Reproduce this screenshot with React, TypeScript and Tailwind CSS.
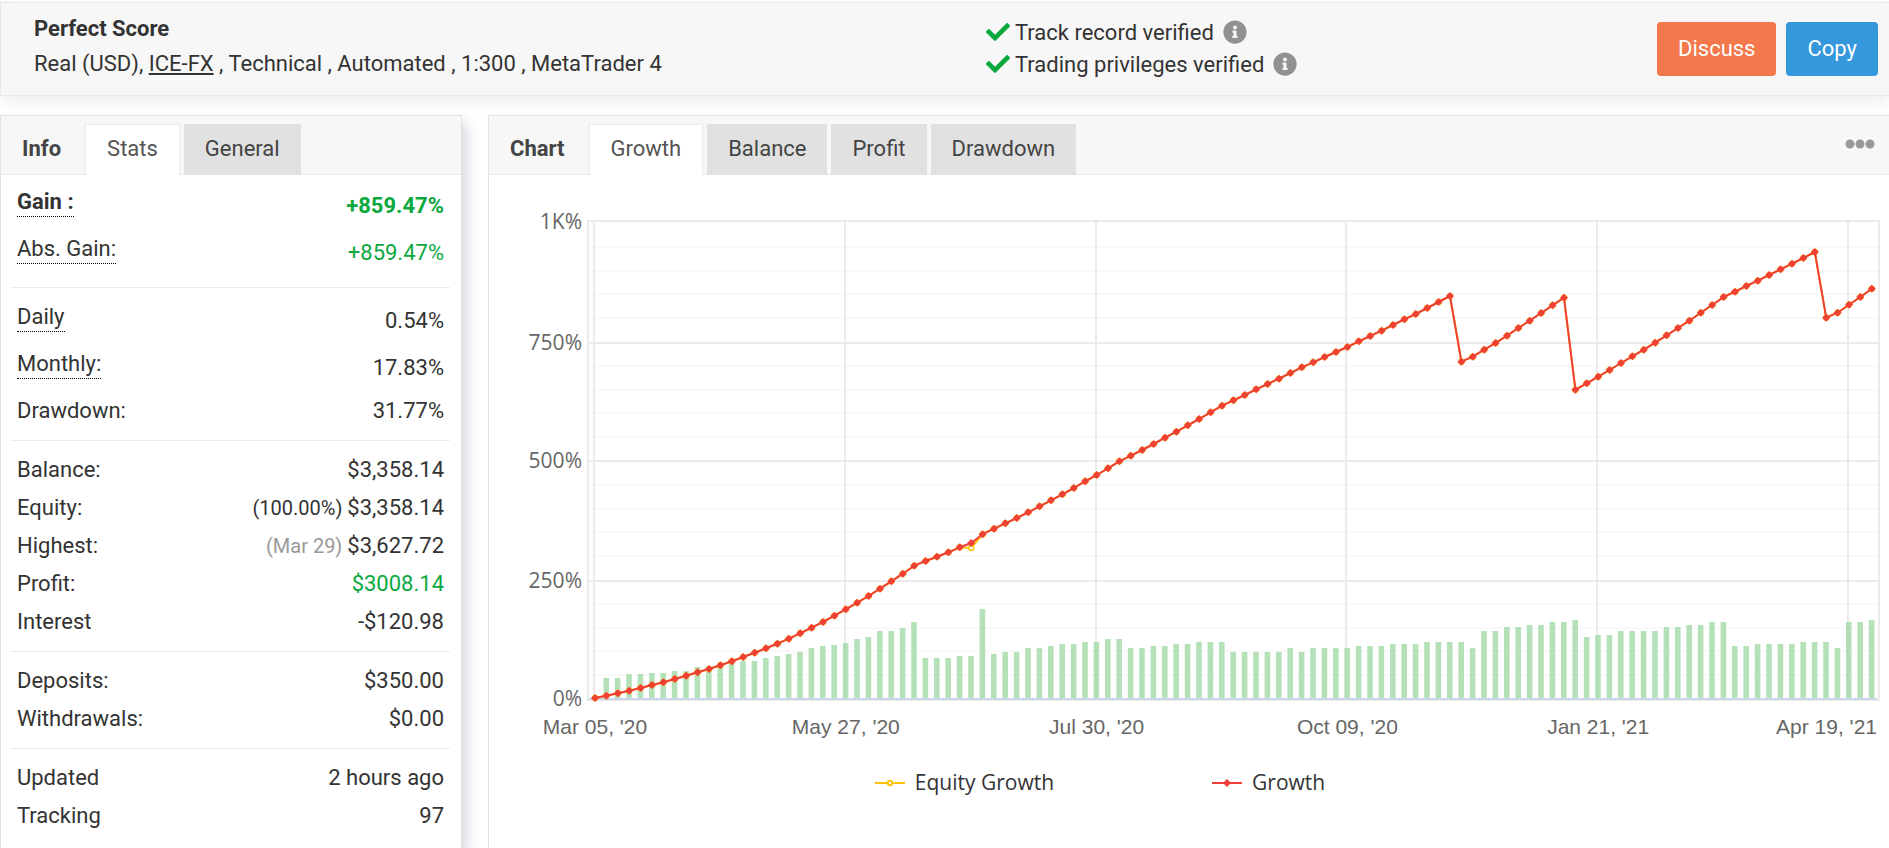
import { useState } from "react";
import { FaCheck, FaInfoCircle } from "react-icons/fa";

type Row = {
  label: string;
  value: string;
  note?: string;
  noteMuted?: boolean;
  hint?: boolean; // dotted underline, taller row
  bold?: boolean;
  green?: boolean;
};

const sections: Row[][] = [
  [
    { label: "Gain :", value: "+859.47%", hint: true, bold: true, green: true },
    { label: "Abs. Gain:", value: "+859.47%", hint: true, green: true },
  ],
  [
    { label: "Daily", value: "0.54%", hint: true },
    { label: "Monthly:", value: "17.83%", hint: true },
    { label: "Drawdown:", value: "31.77%" },
  ],
  [
    { label: "Balance:", value: "$3,358.14" },
    { label: "Equity:", value: "$3,358.14", note: "(100.00%)" },
    { label: "Highest:", value: "$3,627.72", note: "(Mar 29)", noteMuted: true },
    { label: "Profit:", value: "$3008.14", green: true },
    { label: "Interest", value: "-$120.98" },
  ],
  [
    { label: "Deposits:", value: "$350.00" },
    { label: "Withdrawals:", value: "$0.00" },
  ],
  [
    { label: "Updated", value: "2 hours ago" },
    { label: "Tracking", value: "97" },
  ],
];

// heights above the zero line, in plot units (1K% = 476)
const growth = [
  1, 3.3, 5.7, 8.3, 11, 14, 16.7, 20, 23.3, 26.7, 30, 33.7, 37.7, 42, 46.3, 50.7, 55.3, 60.3, 65.7, 71.3,
  77, 83.3, 89.7, 96.3, 103, 110.3, 117.7, 125.3, 133.3, 138, 142.3, 146.7, 151.7, 156, 164.8, 170.3,
  175.7, 181, 186.7, 192.7, 198.7, 204.7, 211, 217.7, 224, 230.7, 237.7, 243.3, 249, 255, 261.3, 267.3,
  273.7, 280, 286.7, 293.3, 298.7, 304, 309.7, 315, 320.3, 326, 331.7, 336.7, 342, 347, 352, 357.7, 363,
  368.3, 374, 379.7, 385, 391, 397, 403, 337.3, 342.3, 349.3, 356, 363.3, 371, 378.3, 386, 393.7, 401.3,
  309.3, 315.7, 322.3, 329, 336, 342.7, 349.3, 356.3, 363.7, 371, 378.3, 386.3, 394, 402, 407.3, 413,
  418.3, 424, 429.7, 435.3, 441, 447, 381.3, 386.3, 394.3, 402, 410.3,
];

const equity = growth.map((v, i) => (i === 33 ? 151 : v));

const bars = [
  0, 21, 21, 25, 25, 26, 26, 28, 28, 32, 32, 34, 36, 38, 38, 41, 43, 45, 47, 51, 53, 54, 56, 60, 62, 68, 68,
  71, 77, 41, 41, 41, 43, 43, 90, 45, 47, 47, 51, 51, 53, 55, 55, 57, 57, 60, 60, 51, 51, 53, 53, 55, 55, 57,
  57, 57, 47, 47, 47, 47, 47, 51, 47, 51, 51, 51, 51, 53, 53, 53, 55, 55, 55, 57, 57, 57, 57, 51, 68, 68, 72,
  72, 74, 74, 77, 77, 79, 62, 64, 64, 68, 68, 68, 68, 72, 72, 74, 74, 77, 77, 53, 53, 55, 55, 55, 55, 57, 57,
  57, 51, 77, 77, 79,
];

const LEFT = 100;
const RIGHT = 1389;
const TOP = 46;
const ZERO = 523;
const STEP = 11.4;

const px = (i: number) => 106 + i * STEP;
const py = (v: number) => ZERO - v;
const line = (data: number[]) =>
  data.map((v, i) => `${i ? "L" : "M"}${px(i).toFixed(1)} ${py(v).toFixed(1)}`).join("");

const yTicks = [
  { label: "1K%", y: 46 },
  { label: "750%", y: 167 },
  { label: "500%", y: 285 },
  { label: "250%", y: 405 },
  { label: "0%", y: 523 },
];

const xTicks = [
  { label: "Mar 05, '20", i: 0 },
  { label: "May 27, '20", i: 22 },
  { label: "Jul 30, '20", i: 44 },
  { label: "Oct 09, '20", i: 66 },
  { label: "Jan 21, '21", i: 88 },
  { label: "Apr 19, '21", i: 110 },
];

function GrowthChart() {
  return (
    <svg viewBox="0 0 1400 570" className="block w-full" role="img" aria-label="Growth chart">
      {Array.from({ length: 20 }, (_, i) => i)
        .filter((i) => i % 5 !== 0)
        .map((i) => (
          <rect key={i} x={LEFT} y={Math.round(ZERO - i * 23.8) - 1} width={RIGHT - LEFT} height="2" fill="#f9f9f9" />
        ))}
      {xTicks.map((t) => (
        <rect key={t.i} x={Math.round(105 + t.i * STEP) - 1} y={TOP} width="2" height={ZERO - TOP} fill="#ebebeb" />
      ))}
      {yTicks.slice(1, 4).map((t) => (
        <rect key={t.label} x={LEFT} y={t.y - 1} width={RIGHT - LEFT} height="2" fill="#ebebeb" />
      ))}
      <rect x={LEFT - 1} y={TOP - 1} width={RIGHT - LEFT + 2} height={ZERO - TOP + 2} fill="none" stroke="#ebebeb" strokeWidth="2" />

      {bars.map((h, i) => (
        <rect key={i} x={px(i) - 3} y={ZERO - h} width="5.6" height={h} fill="#9cd7a1" fillOpacity="0.75" />
      ))}
      <rect x={LEFT} y={ZERO - 1} width={RIGHT - LEFT - 1} height="2" fill="#ccd6eb" />

      <path d={line(equity)} fill="none" stroke="#ffc20e" strokeWidth="2" strokeLinejoin="round" />
      {equity.map((v, i) => (
        <circle key={i} cx={px(i)} cy={py(v)} r="2.5" fill={i === 33 ? "#fff" : "#ffc20e"} stroke="#ffc20e" strokeWidth="1.5" />
      ))}
      <path d={line(growth)} fill="none" stroke="#ee4036" strokeWidth="2" strokeLinejoin="round" />
      {growth.map((v, i) => (
        <path key={i} d={`M${px(i)} ${py(v) - 4}l4 4l-4 4l-4 -4z`} fill="#ee4036" />
      ))}

      {yTicks.map((t) => (
        <text key={t.label} x="93" y={t.y + 7} textAnchor="end" fontSize="21" fill="#666" className="font-['Open_Sans',sans-serif]">
          {t.label}
        </text>
      ))}
      {xTicks.map((t, n) => (
        <text
          key={t.i}
          x={n === xTicks.length - 1 ? 1388 : px(t.i)}
          y="558"
          textAnchor={n === xTicks.length - 1 ? "end" : "middle"}
          fontSize="21"
          fill="#666"
          className="font-['Liberation_Sans',sans-serif]"
        >
          {t.label}
        </text>
      ))}
    </svg>
  );
}

type TabsProps = {
  title: string;
  tabs: string[];
  active: string;
  onPick: (tab: string) => void;
};

function Tabs({ title, tabs, active, onPick }: TabsProps) {
  return (
    <div className="flex h-[51px] items-stretch text-[22px]">
      <h2 className="pr-6 pl-[21px] leading-[49px] font-bold text-[#444]">{title}</h2>
      <div className="flex gap-1" role="tablist">
        {tabs.map((t) => (
          <button
            key={t}
            role="tab"
            aria-selected={t === active}
            onClick={() => onPick(t)}
            className={
              t === active
                ? "border border-b-0 border-[#ebebeb] bg-white px-[21px] pb-[3px] text-[#555]"
                : "bg-[#e1e1e1] px-[21px] pb-0.5 text-[#444]"
            }
          >
            {t}
          </button>
        ))}
      </div>
    </div>
  );
}

function StatRow({ row }: { row: Row }) {
  const weight = row.bold ? "font-bold" : "";
  return (
    <div className={`flex justify-between px-1.5 ${row.hint ? "h-[47px] py-0.5" : "h-[38px]"} ${weight}`}>
      <dt className={row.hint ? "self-start border-b border-dotted border-black pt-1 leading-7" : "self-center"}>
        {row.label}
      </dt>
      <dd className={`self-center ${row.green ? "text-[#0aa83f]" : ""}`}>
        {row.note && (
          <span className={`text-[20px] ${row.noteMuted ? "text-[#999]" : ""}`}>{row.note} </span>
        )}
        {row.value}
      </dd>
    </div>
  );
}

function Verified({ text }: { text: string }) {
  return (
    <li className="flex h-8 items-center gap-[5px]">
      <FaCheck className="size-6 text-[#0aa83f]" />
      {text}
      <FaInfoCircle className="ml-1 size-6 text-[#919191]" />
    </li>
  );
}

export default function App() {
  const [infoTab, setInfoTab] = useState("Stats");
  const [chartTab, setChartTab] = useState("Growth");

  return (
    <div className="flex min-h-screen flex-col overflow-hidden bg-white font-[Roboto,sans-serif] text-[22px] text-[#333]">
      <header className="mt-0.5 flex h-[94px] items-start border border-r-0 border-[#e8e8e8] bg-[#f7f7f7] shadow-[0_4px_16px_rgba(60,60,100,0.1)]">
        <div className="w-[985px] pt-[9px] pl-[33px]">
          <h1 className="leading-[34px] font-bold">Perfect Score</h1>
          <p className="leading-9">
            Real (USD),{" "}
            <a href="#ice-fx" className="underline">
              ICE-FX
            </a>{" "}
            , Technical , Automated , 1:300 , MetaTrader 4
          </p>
        </div>
        <ul className="flex-1 pt-[13px]">
          <Verified text="Track record verified" />
          <Verified text="Trading privileges verified" />
        </ul>
        <div className="flex gap-2.5 pt-[19px] pr-[11px] text-white">
          <button className="h-[54px] rounded-sm bg-[#f3784b] px-[21px] pb-0.5">Discuss</button>
          <button className="h-[54px] rounded-sm bg-[#3598dc] px-[21px] pb-0.5">Copy</button>
        </div>
      </header>

      <main className="mt-[19px] flex flex-1 gap-[26px]">
        <section className="w-[462px] shrink-0 border border-b-0 border-[#e1e1e1] shadow-[5px_8px_12px_rgba(60,60,100,0.2)]">
          <div className="border-b border-[#ebebeb] bg-[#f7f7f7] pt-2">
            <div className="-mb-px">
              <Tabs title="Info" tabs={["Stats", "General"]} active={infoTab} onPick={setInfoTab} />
            </div>
          </div>
          <dl className="pr-[11px] pl-2.5">
            {sections.map((rows, i) => (
              <div key={i} className={i ? "border-t border-[#ebebeb] pt-[9px] pb-[11px]" : "pt-[7px] pb-[11px]"}>
                {rows.map((r) => (
                  <StatRow key={r.label} row={r} />
                ))}
              </div>
            ))}
          </dl>
        </section>

        <section className="min-w-0 flex-1 border-t border-l border-[#e1e1e1]">
          <div className="flex justify-between border-b border-[#ebebeb] bg-[#f7f7f7] pt-2">
            <div className="-mb-px">
              <Tabs
                title="Chart"
                tabs={["Growth", "Balance", "Profit", "Drawdown"]}
                active={chartTab}
                onPick={setChartTab}
              />
            </div>
            <button aria-label="More options" className="mr-3.5 h-10">
              <svg width="30" height="10" viewBox="0 0 30 10" fill="#999">
                <circle cx="5" cy="5" r="4.5" />
                <circle cx="15" cy="5" r="4.5" />
                <circle cx="25" cy="5" r="4.5" />
              </svg>
            </button>
          </div>
          <div className="pt-px">
            <GrowthChart />
          </div>
          <div className="mt-[21px] flex justify-center gap-[158px] pr-[178px] font-['Open_Sans',sans-serif] text-[21px] text-[#333]">
            <button className="flex items-center gap-2.5">
              <svg width="30" height="12" viewBox="0 0 30 12">
                <path d="M0 6h30" stroke="#ffc20e" strokeWidth="2" />
                <circle cx="15" cy="6" r="2.2" fill="#fff" stroke="#ffc20e" strokeWidth="2" />
              </svg>
              Equity Growth
            </button>
            <button className="flex items-center gap-2.5">
              <svg width="30" height="12" viewBox="0 0 30 12">
                <path d="M0 6h30" stroke="#ee4036" strokeWidth="2" />
                <path d="M15 2l4 4l-4 4l-4 -4z" fill="#ee4036" />
              </svg>
              Growth
            </button>
          </div>
        </section>
      </main>
    </div>
  );
}
